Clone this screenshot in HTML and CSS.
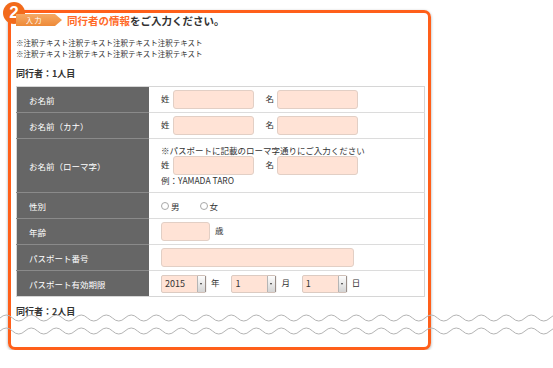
FILE: index.html
```html
<!DOCTYPE html>
<html lang="ja">
<head>
    <meta charset="UTF-8">
    <meta name="viewport" content="width=device-width, initial-scale=1.0">
    <title>同行者の情報</title>
    <link rel="stylesheet" href="styles.css">
</head>
<body>
    <div class="card">
        <span class="step">2</span>
        <div class="head">
            <span class="tag">入 力</span>
            <h1><em>同行者の情報</em>をご入力ください。</h1>
        </div>

        <p class="notes">※注釈テキスト注釈テキスト注釈テキスト注釈テキスト<br>※注釈テキスト注釈テキスト注釈テキスト注釈テキスト</p>

        <h2>同行者：1人目</h2>
        <table class="form">
            <tr>
                <th>お名前</th>
                <td>姓<input type="text" class="name">名<input type="text" class="name"></td>
            </tr>
            <tr>
                <th>お名前（カナ）</th>
                <td>姓<input type="text" class="name">名<input type="text" class="name"></td>
            </tr>
            <tr class="tall">
                <th>お名前（ローマ字）</th>
                <td>
                    <div class="hint">※パスポートに記載のローマ字通りにご入力ください</div>
                    <div>姓<input type="text" class="name">名<input type="text" class="name"></div>
                    <div class="example">例：YAMADA TARO</div>
                </td>
            </tr>
            <tr>
                <th>性別</th>
                <td><label class="radio"><i></i>男</label><label class="radio"><i></i>女</label></td>
            </tr>
            <tr>
                <th>年齢</th>
                <td><input type="text" class="age">歳</td>
            </tr>
            <tr>
                <th>パスポート番号</th>
                <td><input type="text" class="passport"></td>
            </tr>
            <tr>
                <th>パスポート有効期限</th>
                <td>
                    <span class="select">2015<i></i></span>年
                    <span class="select">1<i></i></span>月
                    <span class="select">1<i></i></span>日
                </td>
            </tr>
        </table>

        <h2 class="next">同行者：2人目</h2>
    </div>

    <!-- torn edge -->
    <svg class="cut" width="553" height="30" viewBox="0 0 553 30">
        <defs>
            <clipPath id="inside"><rect x="11" y="0" width="417" height="30"/></clipPath>
        </defs>
        <path clip-path="url(#inside)" fill="#fff" d="M0 10 q6.25 -6 12.5 0 t12.5 0 t12.5 0 t12.5 0 t12.5 0 t12.5 0 t12.5 0 t12.5 0 t12.5 0 t12.5 0 t12.5 0 t12.5 0 t12.5 0 t12.5 0 t12.5 0 t12.5 0 t12.5 0 t12.5 0 t12.5 0 t12.5 0 t12.5 0 t12.5 0 t12.5 0 t12.5 0 t12.5 0 t12.5 0 t12.5 0 t12.5 0 t12.5 0 t12.5 0 t12.5 0 t12.5 0 t12.5 0 t12.5 0 t12.5 0 t12.5 0 t12.5 0 t12.5 0 t12.5 0 t12.5 0 t12.5 0 t12.5 0 t12.5 0 t12.5 0 t12.5 0 t12.5 0 L575 30 L0 30 Z"/>
        <path class="wave" d="M0 10 q6.25 -6 12.5 0 t12.5 0 t12.5 0 t12.5 0 t12.5 0 t12.5 0 t12.5 0 t12.5 0 t12.5 0 t12.5 0 t12.5 0 t12.5 0 t12.5 0 t12.5 0 t12.5 0 t12.5 0 t12.5 0 t12.5 0 t12.5 0 t12.5 0 t12.5 0 t12.5 0 t12.5 0 t12.5 0 t12.5 0 t12.5 0 t12.5 0 t12.5 0 t12.5 0 t12.5 0 t12.5 0 t12.5 0 t12.5 0 t12.5 0 t12.5 0 t12.5 0 t12.5 0 t12.5 0 t12.5 0 t12.5 0 t12.5 0 t12.5 0 t12.5 0 t12.5 0 t12.5 0"/>
        <path class="wave" d="M0 23 q6.25 -6 12.5 0 t12.5 0 t12.5 0 t12.5 0 t12.5 0 t12.5 0 t12.5 0 t12.5 0 t12.5 0 t12.5 0 t12.5 0 t12.5 0 t12.5 0 t12.5 0 t12.5 0 t12.5 0 t12.5 0 t12.5 0 t12.5 0 t12.5 0 t12.5 0 t12.5 0 t12.5 0 t12.5 0 t12.5 0 t12.5 0 t12.5 0 t12.5 0 t12.5 0 t12.5 0 t12.5 0 t12.5 0 t12.5 0 t12.5 0 t12.5 0 t12.5 0 t12.5 0 t12.5 0 t12.5 0 t12.5 0 t12.5 0 t12.5 0 t12.5 0 t12.5 0 t12.5 0"/>
    </svg>
</body>
</html>
```

FILE: styles.css
```css
:root {
    --orange: #ff5f1a;
    --peach: #ffe3d6;
    --label: #666666;
    --text: #333333;
}

body {
    margin: 0;
    background: #fff;
    color: var(--text);
    font-family: "Noto Sans CJK JP", "Noto Sans", sans-serif;
    font-size: 8.5px;
    position: relative;
}

.card {
    position: relative;
    margin: 10px 0 0 8px;
    width: 423px;
    height: 340px;
    box-sizing: border-box;
    border: 3px solid var(--orange);
    border-radius: 7px;
    padding: 1px 3px 0 5px;
    box-shadow: 0 1px 3px rgba(0, 0, 0, 0.35);
}

.step {
    position: absolute;
    left: -8px;
    top: -11px;
    width: 22px;
    height: 22px;
    border-radius: 50%;
    background: #f26a1b;
    color: #fff;
    font-family: "Liberation Sans", sans-serif;
    font-weight: bold;
    font-size: 17px;
    line-height: 22px;
    text-align: center;
}

.head {
    display: flex;
    align-items: center;
    gap: 5px;
    height: 12px;
}

.tag {
    width: 46px;
    height: 12px;
    box-sizing: border-box;
    padding-left: 10px;
    background: linear-gradient(#f5a964, #ee8a38);
    clip-path: polygon(0 0, 39px 0, 46px 50%, 39px 100%, 0 100%);
    color: #fff;
    font-size: 7px;
    line-height: 12px;
}

h1 {
    margin: 0;
    font-size: 10.5px;
    font-weight: bold;
    color: var(--text);
}

h1 em {
    font-style: normal;
    color: #ff6a28;
}

.notes {
    margin: 11px 0 0;
    font-size: 7.5px;
    line-height: 11px;
}

h2 {
    margin: 9px 0 0;
    font-size: 9px;
    line-height: 12px;
    font-weight: bold;
}

.form {
    margin-top: 6px;
    width: 409px;
    border-collapse: collapse;
    border: 1px solid #d6d6d6;
}

.form tr {
    height: 26px;
}

.form tr.tall {
    height: 54px;
}

.form th {
    width: 120px;
    padding: 0 0 0 12px;
    background: var(--label);
    color: #fff;
    font-weight: normal;
    text-align: left;
    border-bottom: 1px solid #8a8a8a;
}

.form td {
    padding: 0 0 0 12px;
    border-bottom: 1px solid #dcdcdc;
    white-space: nowrap;
}

.form tr:last-child th,
.form tr:last-child td {
    border-bottom-color: #d6d6d6;
}

input {
    box-sizing: border-box;
    height: 19px;
    border: 1px solid #e2cfc5;
    border-radius: 3px;
    background: var(--peach);
    vertical-align: middle;
    padding: 0;
}

.name {
    width: 81px;
    margin: 0 12px 0 3px;
}

.age {
    width: 49px;
    margin-right: 5px;
}

.passport {
    width: 193px;
}

.hint {
    line-height: 11px;
    margin-top: -1px;
}

.example {
    line-height: 11px;
}

.radio {
    display: inline-flex;
    align-items: center;
    margin-right: 20px;
}

.radio i {
    width: 6px;
    height: 6px;
    border: 1px solid #a8a8a8;
    border-radius: 50%;
    margin-right: 2px;
}

.select {
    position: relative;
    display: inline-block;
    box-sizing: border-box;
    width: 45px;
    height: 18px;
    padding-left: 3px;
    margin-right: 5px;
    border: 1px solid #dccbc2;
    border-radius: 2px;
    background: var(--peach);
    font-size: 9px;
    line-height: 16px;
    vertical-align: middle;
}

.form td .select:not(:first-child) {
    margin-left: 10px;
}

.select i {
    position: absolute;
    right: 0;
    top: 0;
    bottom: 0;
    width: 7px;
    background: linear-gradient(#fdfdfd, #d4d4d4);
    border-left: 1px solid #b5b5b5;
    box-shadow: 1px 0 1px rgba(0, 0, 0, 0.3);
}

.select i::after {
    content: "";
    position: absolute;
    left: 2px;
    top: 7px;
    border: 1.5px solid transparent;
    border-top: 2px solid #333;
}

.next {
    margin-top: 9px;
}

.cut {
    position: absolute;
    left: 0;
    top: 308px;
    z-index: 5;
}

.cut .wave {
    fill: none;
    stroke: #b4b4b4;
    stroke-width: 1;
}
```
